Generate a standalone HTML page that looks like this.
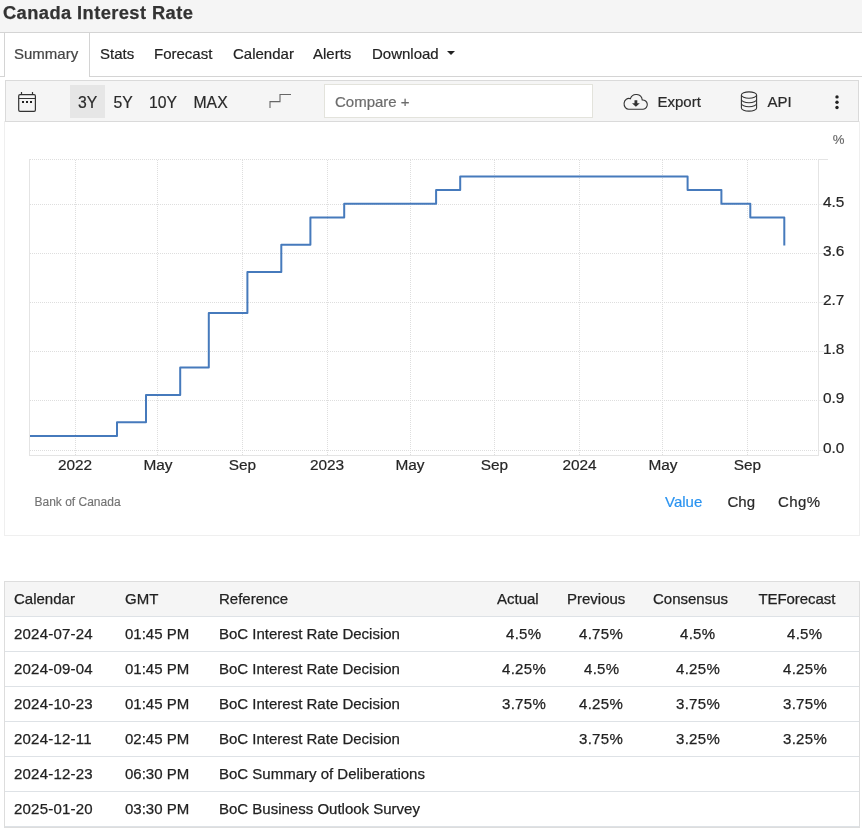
<!DOCTYPE html>
<html>
<head>
<meta charset="utf-8">
<title>Canada Interest Rate</title>
<style>
*{box-sizing:border-box;margin:0;padding:0}
html,body{width:862px;height:829px;overflow:hidden;background:#fff}
body{font-family:"Liberation Sans",sans-serif;font-size:15px;color:#212529;position:relative}
.abs{position:absolute}
#hdr{left:0;top:0;width:862px;height:33px;background:#f5f5f5;border-bottom:1px solid #d4d4d4}
#title{-webkit-text-stroke:0.25px #333;left:3px;top:2px;font-size:18.3px;letter-spacing:0.42px;font-weight:bold;color:#333;white-space:nowrap;line-height:22px}
#tabline{left:0;top:76px;width:862px;height:1px;background:#d4d4d4}
#tabact{left:4px;top:32px;width:86px;height:45px;background:#fff;border:1px solid #d4d4d4;border-bottom:none}
.tab{-webkit-text-stroke:0.2px #222;top:44px;line-height:20px;font-size:15px;white-space:nowrap;color:#222}
#toolbar{left:5px;top:80px;width:854px;height:42px;background:#f5f5f5;border:1px solid #dadada}
.tb{-webkit-text-stroke:0.2px #2a2a2a;top:92px;line-height:20px;font-size:15px;white-space:nowrap;color:#2a2a2a}
.tb2{font-size:15.75px;top:92.5px}
#b3y{left:70px;top:85px;width:35px;height:33px;background:#e6e6e6}
#cmp{left:324px;top:84px;width:269px;height:34px;background:#fff;border:1px solid #e3e3dc}
#chartbox{left:4px;top:121px;width:856px;height:415px;border:1px solid #efefef;border-top:none}
svg text{font-family:"Liberation Sans",sans-serif}
#tbl{left:4px;top:581px;width:856px;height:247px;border:1px solid #ddd}
.row{left:5px;width:854px;height:35px;border-bottom:1px solid #dee2e6}
.c{position:absolute;top:7px;-webkit-text-stroke:0.25px #222;line-height:20px;font-size:15px;white-space:nowrap;color:#222}
.n{letter-spacing:0.3px}
.d{letter-spacing:0.22px}
</style>
</head>
<body><div id="wrap" style="position:absolute;left:0;top:0;width:862px;height:829px;will-change:transform">
<div class="abs" id="hdr"></div>
<div class="abs" id="title">Canada Interest Rate</div>
<div class="abs" id="tabline"></div>
<div class="abs" id="tabact"></div>
<div class="abs tab" style="left:14px;color:#444;-webkit-text-stroke-color:#444">Summary</div>
<div class="abs tab" style="left:100px">Stats</div>
<div class="abs tab" style="left:154px">Forecast</div>
<div class="abs tab" style="left:233px">Calendar</div>
<div class="abs tab" style="left:313px">Alerts</div>
<div class="abs tab" style="left:372px">Download</div>
<div class="abs" style="left:447px;top:51px;width:0;height:0;border-left:4px solid transparent;border-right:4px solid transparent;border-top:4px solid #222"></div>

<div class="abs" id="toolbar"></div>
<div class="abs" id="b3y"></div>
<div class="abs tb tb2" style="left:78px">3Y</div>
<div class="abs tb tb2" style="left:113.500px">5Y</div>
<div class="abs tb tb2" style="left:149px">10Y</div>
<div class="abs tb tb2" style="left:193.500px">MAX</div>
<div class="abs" id="cmp"></div>
<div class="abs tb" style="left:335px;color:#6c6c6c;-webkit-text-stroke-color:#6c6c6c">Compare +</div>
<div class="abs tb" style="left:657.500px">Export</div>
<div class="abs tb" style="left:767.500px">API</div>

<div class="abs" id="chartbox"></div>
<svg class="abs" style="left:0;top:0" width="862" height="829" viewBox="0 0 862 829">
  <!-- toolbar icons -->
  <g fill="none" stroke="#333" stroke-width="1.2">
    <rect x="18.700" y="94.600" width="16.700" height="16.700" rx="1.300"/>
    <path d="M18.700 98.500H35.400M21.500 92v2.600M32.500 92v2.600"/>
  </g>
  <g fill="#222"><rect x="22" y="101" width="2" height="2"/><rect x="26" y="101" width="2" height="2"/><rect x="30" y="101" width="2" height="2"/></g>
  <path d="M270 108V101.600H280V94.500H291" fill="none" stroke="#666" stroke-width="1.100"/>
  <!-- cloud -->
  <path d="M629.200 109.200H643.100A4.600 4.600 0 1 0 642.250 100A6.100 6.100 0 0 0 630.400 98.700A4.800 5.400 0 1 0 629.200 109.200Z" fill="none" stroke="#333" stroke-width="1.100"/>
  <path d="M634.500 100.300h2.800v3h2.500l-3.900 3.500l-3.900-3.500h2.500z" fill="#333"/>
  <!-- db -->
  <g fill="none" stroke="#333" stroke-width="1.100">
    <ellipse cx="749" cy="95.100" rx="7.600" ry="3.200"/>
    <path d="M741.400 95.100V107.900a7.600 3.200 0 0 0 15.200 0V95.100"/>
    <path d="M741.400 99.600a7.600 3.200 0 0 0 15.200 0M741.400 103.600a7.600 3.200 0 0 0 15.200 0"/>
  </g>
  <g fill="#222"><circle cx="837" cy="96.900" r="1.700"/><circle cx="837" cy="102.200" r="1.700"/><circle cx="837" cy="107.500" r="1.700"/></g>

  <!-- chart grid -->
  <g stroke="#dedede" stroke-width="1" stroke-dasharray="1 1" fill="none">
    <path d="M30 159.500H818M30 204.500H818M30 253.500H818M30 302.500H818M30 351.500H818M30 400.500H818M30 450.500H818"/>
    <path d="M75.500 160V455M157.500 160V455M242.500 160V455M327.500 160V455M410.500 160V455M494.500 160V455M579.500 160V455M662.500 160V455M747.500 160V455"/>
  </g>
  <g stroke="#e4e4e4" stroke-width="1" fill="none">
    <path d="M29.500 159V456M29 455.500H819M818.500 159V456M818 159.500H828"/>
    <path stroke="#efefef" d="M819 204.500H824M819 253.500H824M819 302.500H824M819 351.500H824M819 400.500H824M819 450.500H824"/>
  </g>
  <!-- series -->
  <path id="ser" fill="none" stroke="#467abc" stroke-width="2" stroke-linejoin="round" d="M30 435.9H117V422.2H146V394.9H180.2V367.6H208.8V313.0H247.4V272.0H281.3V244.8H310.4V217.4H344.2V203.8H436.1V190.1H460.2V176.5H687.6V190.1H721.4V203.8H750.3V217.4H784.3V245.6"/>
  <g font-size="15.400" fill="#262626" stroke="#262626" stroke-width="0.2">
    <text x="823" y="206.500">4.5</text>
    <text x="823" y="255.500">3.6</text>
    <text x="823" y="304.500">2.7</text>
    <text x="823" y="353.500">1.8</text>
    <text x="823" y="402.500">0.9</text>
    <text x="823" y="452.500">0.0</text>
  </g>
  <text x="832.800" y="144.200" font-size="13.200" fill="#666" stroke="#666" stroke-width="0.150">%</text>
  <g font-size="15.400" fill="#262626" stroke="#262626" stroke-width="0.2" text-anchor="middle">
    <text x="75" y="470">2022</text>
    <text x="158" y="470">May</text>
    <text x="242.500" y="470">Sep</text>
    <text x="327" y="470">2023</text>
    <text x="410" y="470">May</text>
    <text x="494.500" y="470">Sep</text>
    <text x="579.500" y="470">2024</text>
    <text x="663" y="470">May</text>
    <text x="747.500" y="470">Sep</text>
  </g>
  <text x="34.500" y="506" font-size="12" fill="#737373" stroke="#737373" stroke-width="0.150">Bank of Canada</text>
  <text x="665" y="507" font-size="15" fill="#2a93f0" stroke="#2a93f0" stroke-width="0.2">Value</text>
  <text x="727.500" y="507" font-size="15" fill="#2a2a2a" stroke="#2a2a2a" stroke-width="0.2">Chg</text>
  <text x="778" y="507" font-size="15" fill="#2a2a2a" stroke="#2a2a2a" stroke-width="0.2" letter-spacing="0.4">Chg%</text>
</svg>

<div class="abs" id="tbl"></div>
<div class="abs" style="left:5px;top:582px;width:854px;height:34px;background:#f5f5f5"></div>
<div class="abs row" style="top:582px">
  <span class="c" style="left:9px">Calendar</span><span class="c" style="left:120px">GMT</span><span class="c" style="left:214px">Reference</span>
  <span class="c" style="left:492px">Actual</span><span class="c" style="left:562px">Previous</span><span class="c" style="left:648px">Consensus</span><span class="c" style="left:753.500px;letter-spacing:-0.080px">TEForecast</span>
</div>
<div class="abs row" style="top:617px">
  <span class="c d" style="left:9px">2024-07-24</span><span class="c" style="left:120px">01:45 PM</span><span class="c" style="left:214px">BoC Interest Rate Decision</span>
  <span class="c n" style="left:501px">4.5%</span><span class="c n" style="left:574px">4.75%</span><span class="c n" style="left:675px">4.5%</span><span class="c n" style="left:782px">4.5%</span>
</div>
<div class="abs row" style="top:652px">
  <span class="c d" style="left:9px">2024-09-04</span><span class="c" style="left:120px">01:45 PM</span><span class="c" style="left:214px">BoC Interest Rate Decision</span>
  <span class="c n" style="left:497px">4.25%</span><span class="c n" style="left:579px">4.5%</span><span class="c n" style="left:671px">4.25%</span><span class="c n" style="left:778px">4.25%</span>
</div>
<div class="abs row" style="top:687px">
  <span class="c d" style="left:9px">2024-10-23</span><span class="c" style="left:120px">01:45 PM</span><span class="c" style="left:214px">BoC Interest Rate Decision</span>
  <span class="c n" style="left:497px">3.75%</span><span class="c n" style="left:574px">4.25%</span><span class="c n" style="left:671px">3.75%</span><span class="c n" style="left:778px">3.75%</span>
</div>
<div class="abs row" style="top:722px">
  <span class="c d" style="left:9px">2024-12-11</span><span class="c" style="left:120px">02:45 PM</span><span class="c" style="left:214px">BoC Interest Rate Decision</span>
  <span class="c n" style="left:574px">3.75%</span><span class="c n" style="left:671px">3.25%</span><span class="c n" style="left:778px">3.25%</span>
</div>
<div class="abs row" style="top:757px">
  <span class="c d" style="left:9px">2024-12-23</span><span class="c" style="left:120px">06:30 PM</span><span class="c" style="left:214px">BoC Summary of Deliberations</span>
</div>
<div class="abs row" style="top:792px">
  <span class="c d" style="left:9px">2025-01-20</span><span class="c" style="left:120px">03:30 PM</span><span class="c" style="left:214px">BoC Business Outlook Survey</span>
</div>
</div></body>
</html>
